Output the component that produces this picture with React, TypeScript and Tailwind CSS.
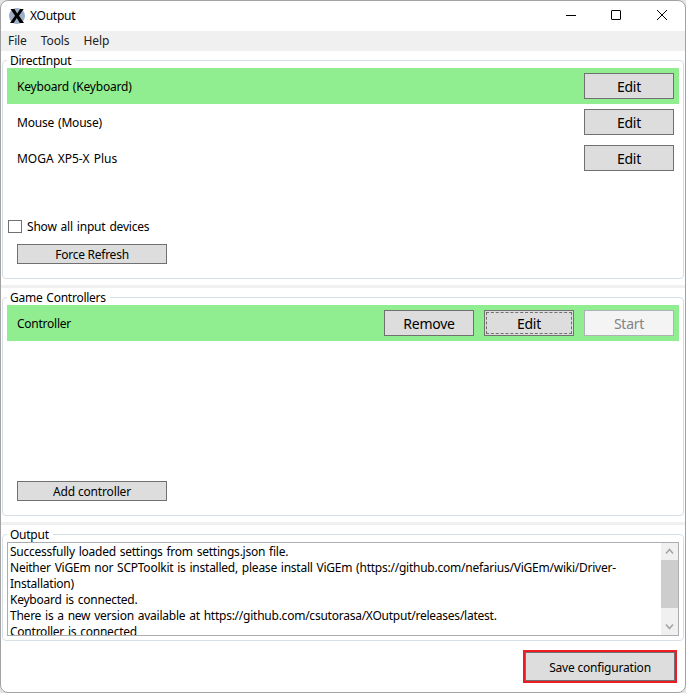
import React from 'react'
import clsx from 'clsx'

interface ButtonProps {
  label: string
  className?: string
  disabled?: boolean
  focused?: boolean
}

const Button = ({ label, className, disabled, focused }: ButtonProps) => {
  return (
    <button
      disabled={disabled}
      className={clsx(
        'flex shrink-0 border',
        disabled
          ? 'border-[#adb2b5] bg-[#f4f4f4] text-[#838383]'
          : 'border-[#707070] bg-[#dddddd] text-black',
        className,
      )}
    >
      <span
        className={clsx(
          'm-px flex flex-1 items-center justify-center self-stretch pt-px whitespace-nowrap',
          focused && 'border border-dashed border-[#707070]',
        )}
      >
        {label}
      </span>
    </button>
  )
}

interface GroupProps {
  title: string
  className: string
  children: React.ReactNode
}

const Group = ({ title, className, children }: GroupProps) => {
  return (
    <section
      className={clsx(
        'mr-px ml-px flex shrink-0 flex-col rounded-[4px] border border-[#d5dfe5] px-1',
        className,
      )}
    >
      <h2 className="-mt-2 h-[15px] w-fit bg-white pr-1 pl-[3px] leading-[15px]">
        {title}
      </h2>
      {children}
    </section>
  )
}

interface RowProps {
  name: string
  active?: boolean
  className?: string
  children: React.ReactNode
}

const Row = ({ name, active, className, children }: RowProps) => {
  return (
    <div
      className={clsx(
        'flex h-9 shrink-0 items-center gap-2.5 pr-[5px] pl-2.5',
        active && 'bg-[#90ee90]',
      )}
    >
      <span className={clsx('flex-1 pt-0.5', className)}>{name}</span>
      {children}
    </div>
  )
}

const Splitter = () => <div className="my-[6px] h-[3px] shrink-0 bg-[#f0f0f0]" />

const devices = [
  { name: 'Keyboard (Keyboard)', active: true, className: 'tracking-[-0.2px]' },
  { name: 'Mouse (Mouse)', active: false, className: 'tracking-[-0.2px]' },
  { name: 'MOGA XP5-X Plus', active: false, className: 'tracking-[-0.02px]' },
]

const logs = [
  'Successfully loaded settings from settings.json file.',
  'Neither ViGEm nor SCPToolkit is installed, please install ViGEm (https://github.com/nefarius/ViGEm/wiki/Driver-',
  'Installation)',
  'Keyboard is connected.',
  'There is a new version available at https://github.com/csutorasa/XOutput/releases/latest.',
  'Controller is connected',
]

const TitleBar = () => {
  return (
    <header className="flex h-[30px] shrink-0 items-center pl-2">
      <svg width="16" height="16" viewBox="0 0 16 16">
        <circle cx="8" cy="8" r="8" fill="#9aaec4" />
        <path d="M1.500 1h4l2.600 4.600L11.200 1h3.500l-4.700 6.800L15 15h-4.200L7.800 9.900 4.600 15H1l5-7.200z" fill="#000" />
      </svg>
      <span className="ml-[5px] flex-1">XOutput</span>
      <svg width="124" height="30" viewBox="0 0 124 30" fill="none" stroke="#000">
        <path d="M5 14.500h10" />
        <rect x="50.500" y="9.500" width="9" height="9" rx="0.5" />
        <path d="M96 9l10 10M106 9l-10 10" />
      </svg>
    </header>
  )
}

const ScrollBar = () => {
  return (
    <div className="flex w-[17px] shrink-0 flex-col bg-[#f0f0f0]">
      <svg width="17" height="17" fill="none" stroke="#a3a3a3" strokeWidth="1.500">
        <path d="M5 10.500l3.500-4 3.500 4" />
      </svg>
      <div className="h-12 bg-[#cdcdcd]" />
      <div className="flex-1" />
      <svg width="17" height="17" fill="none" stroke="#a3a3a3" strokeWidth="1.500">
        <path d="M5 6.500l3.500 4 3.500-4" />
      </svg>
    </div>
  )
}

const App = () => {
  return (
    <div className="h-[693px] w-[686px] bg-[#e4e4e4] font-['Noto_Sans','Noto_Sans_CJK_KR',sans-serif] text-[12px] leading-4 tracking-[-0.25px] text-black [word-spacing:1px]">
      <main className="flex h-full flex-col overflow-hidden rounded-[8px] border border-[#a2a2a2] bg-white">
        <TitleBar />
        <nav className="flex h-5 shrink-0 items-center gap-3.5 bg-[#f0f0f0] pl-[7px] tracking-[-0.1px] text-[#212121]">
          <span>File</span>
          <span>Tools</span>
          <span>Help</span>
        </nav>

        <Group title="DirectInput" className="mt-[9px] h-[219px]">
          {devices.map((device) => (
            <Row
              key={device.name}
              name={device.name}
              active={device.active}
              className={device.className}
            >
              <Button label="Edit" className="h-[26px] w-[90px] text-[14px]" />
            </Row>
          ))}
          <label className="mt-[43px] ml-px flex h-[15px] items-center gap-[5px] tracking-[-0.2px]">
            <span className="h-[13px] w-[14px] border border-[#707070] bg-white" />
            Show all input devices
          </label>
          <Button label="Force Refresh" className="mt-[10px] ml-2.5 h-5 w-[150px]" />
        </Group>

        <Splitter />

        <Group title="Game Controllers" className="mt-[3px] h-[219px]">
          <Row name="Controller" active>
            <Button label="Remove" className="h-[26px] w-[90px] text-[14px]" />
            <Button label="Edit" focused className="h-[26px] w-[90px] text-[14px]" />
            <Button label="Start" disabled className="h-[26px] w-[90px] text-[14px]" />
          </Row>
          <Button
            label="Add controller"
            className="mt-[140px] ml-2.5 h-5 w-[150px] tracking-[-0.15px]"
          />
        </Group>

        <Splitter />

        <Group title="Output" className="mt-[3px] h-[107px]">
          <div className="flex h-[94px] shrink-0 border border-[#abadb3]">
            <div className="flex-1 overflow-hidden pt-px pl-[2px] tracking-[-0.24px]">
              {logs.map((line) => (
                <p key={line} className="whitespace-nowrap">
                  {line}
                </p>
              ))}
            </div>
            <ScrollBar />
          </div>
        </Group>

        <div className="mt-[9px] mr-2 self-end border-2 border-[#ed1c24]">
          <Button
            label="Save configuration"
            className="h-[29px] w-[150px] pt-px tracking-[-0.2px]"
          />
        </div>
      </main>
    </div>
  )
}

export default App
